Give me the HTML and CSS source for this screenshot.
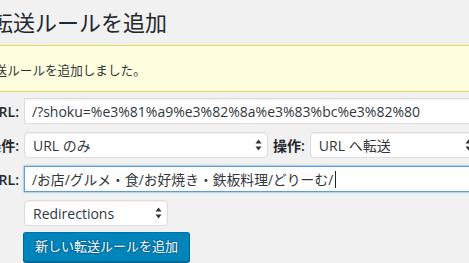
FILE: index.html
```html
<!DOCTYPE html>
<html lang="ja">
<head>
<meta charset="utf-8">
<link rel="stylesheet" href="styles.css">
</head>
<body>
<div class="wrap">
  <h1 class="title">転送ルールを追加</h1>
  <div class="notice"><p>転送ルールを追加しました。</p></div>
  <div class="form">
    <div class="lbl"><span>ソース URL:</span></div>
    <div class="field"><input class="text wide" type="text" value="/?shoku=%e3%81%a9%e3%82%8a%e3%83%bc%e3%82%80"></div>

    <div class="lbl"><span>一致条件:</span></div>
    <div class="field pair">
      <div class="sel sel-match">
        <select><option>URL のみ</option></select>
        <svg class="arrows" width="7" height="12" viewBox="0 0 7 12"><path d="M3.5 0.5 L6.5 4.5 L0.5 4.5 Z M3.5 11.5 L6.5 7.5 L0.5 7.5 Z" fill="#333"/></svg>
      </div>
      <span class="lbl-inline">操作:</span>
      <div class="sel sel-action">
        <select><option>URL へ転送</option></select>
        <svg class="arrows" width="7" height="12" viewBox="0 0 7 12"><path d="M3.5 0.5 L6.5 4.5 L0.5 4.5 Z M3.5 11.5 L6.5 7.5 L0.5 7.5 Z" fill="#333"/></svg>
      </div>
    </div>

    <div class="lbl"><span>ターゲット URL:</span></div>
    <div class="field"><input class="text wide focus jp" type="text" value="/お店/グルメ・食/お好焼き・鉄板料理/どりーむ/"><span class="caret"></span></div>

    <div class="lbl"></div>
    <div class="field">
      <div class="sel sel-group">
        <select><option>Redirections</option></select>
        <svg class="arrows" width="7" height="12" viewBox="0 0 7 12"><path d="M3.5 0.5 L6.5 4.5 L0.5 4.5 Z M3.5 11.5 L6.5 7.5 L0.5 7.5 Z" fill="#333"/></svg>
      </div>
    </div>

    <div class="lbl"></div>
    <div class="field btnrow"><button class="button">新しい転送ルールを追加</button></div>
  </div>
</div>
</body>
</html>
```
FILE: styles.css
```css
html, body {
  margin: 0;
  padding: 0;
  background: #f1f1f1;
  overflow: hidden;
  width: 469px;
  height: 263px;
}
body {
  font-family: "Open Sans", "Noto Sans CJK JP", sans-serif;
  color: #23282d;
}
.wrap {
  margin-left: -10px;
  width: 540px;
}
.title {
  margin: 0 0 0 1px;
  padding-top: 7px;
  font-size: 22px;
  font-weight: 400;
  line-height: 29px;
  font-family: "Noto Sans CJK JP", sans-serif;
  color: #23282d;
}
.notice {
  margin: 9px 0 0 -21px;
  background: #ffffe0;
  border: 1px solid #e6db55;
  padding: 14px 12px 11px;
}
.notice p {
  margin: 0;
  font-family: "Noto Sans CJK JP", sans-serif;
  font-size: 12.6px;
  line-height: 20px;
  color: #32373c;
}
.form {
  margin-top: 6px;
  display: grid;
  grid-template-columns: 29px 1fr;
  column-gap: 5px;
  row-gap: 8px;
  align-items: center;
}
.lbl {
  display: flex;
  justify-content: flex-end;
  overflow: hidden;
  white-space: nowrap;
}
.lbl span, .lbl-inline {
  flex: none;
  font-family: "Open Sans", "Noto Sans CJK JP", sans-serif;
  font-size: 14px;
  font-weight: 600;
  color: #23282d;
  white-space: nowrap;
}
.lbl-inline {
  margin: 0 5px;
}
.field {
  position: relative;
  display: flex;
  align-items: center;
  height: 26px;
}
.btnrow {
  height: 30px;
  margin-top: -2px;
}
.text {
  box-sizing: border-box;
  height: 26px;
  border: 1px solid #ddd;
  box-shadow: inset 0 1px 2px rgba(0,0,0,.07);
  background: #fff;
  color: #32373c;
  font-family: "Open Sans", "Noto Sans CJK JP", sans-serif;
  font-size: 14px;
  padding: 0 7px;
  margin: 0;
  outline: none;
}
.text.jp {
  font-size: 13.8px;
}
.wide {
  width: 500px;
}
.focus {
  border-color: #5b9dd9;
  box-shadow: 0 0 2px rgba(30,140,190,.8);
}
.caret {
  position: absolute;
  left: 311px;
  top: 5px;
  width: 1px;
  height: 17px;
  background: #222;
}
.sel {
  position: relative;
  height: 26px;
}
.sel select {
  -webkit-appearance: none;
  appearance: none;
  box-sizing: border-box;
  height: 26px;
  width: 100%;
  border: 1px solid #ddd;
  border-radius: 4px;
  box-shadow: inset 0 1px 2px rgba(0,0,0,.07);
  background: #fff;
  color: #32373c;
  font-family: "Open Sans", "Noto Sans CJK JP", sans-serif;
  font-size: 14px;
  padding: 0 20px 0 8px;
  margin: 0;
  outline: none;
}
.arrows {
  position: absolute;
  right: 6px;
  top: 7px;
}
.sel-match { width: 244px; }
.sel-action { width: 168px; }
.sel-group { width: 144px; }
.button {
  box-sizing: border-box;
  height: 30px;
  margin: 0 0 0 -1px;
  padding: 0 11px 2px;
  background: #0085ba;
  border: 1px solid;
  border-color: #0073aa #006799 #006799;
  border-radius: 3px;
  box-shadow: 0 1px 0 #006799;
  color: #fff;
  text-shadow: 0 -1px 1px #006799, 1px 0 1px #006799, 0 1px 1px #006799, -1px 0 1px #006799;
  font-family: "Noto Sans CJK JP", sans-serif;
  font-size: 13px;
  line-height: 26px;
}
```
